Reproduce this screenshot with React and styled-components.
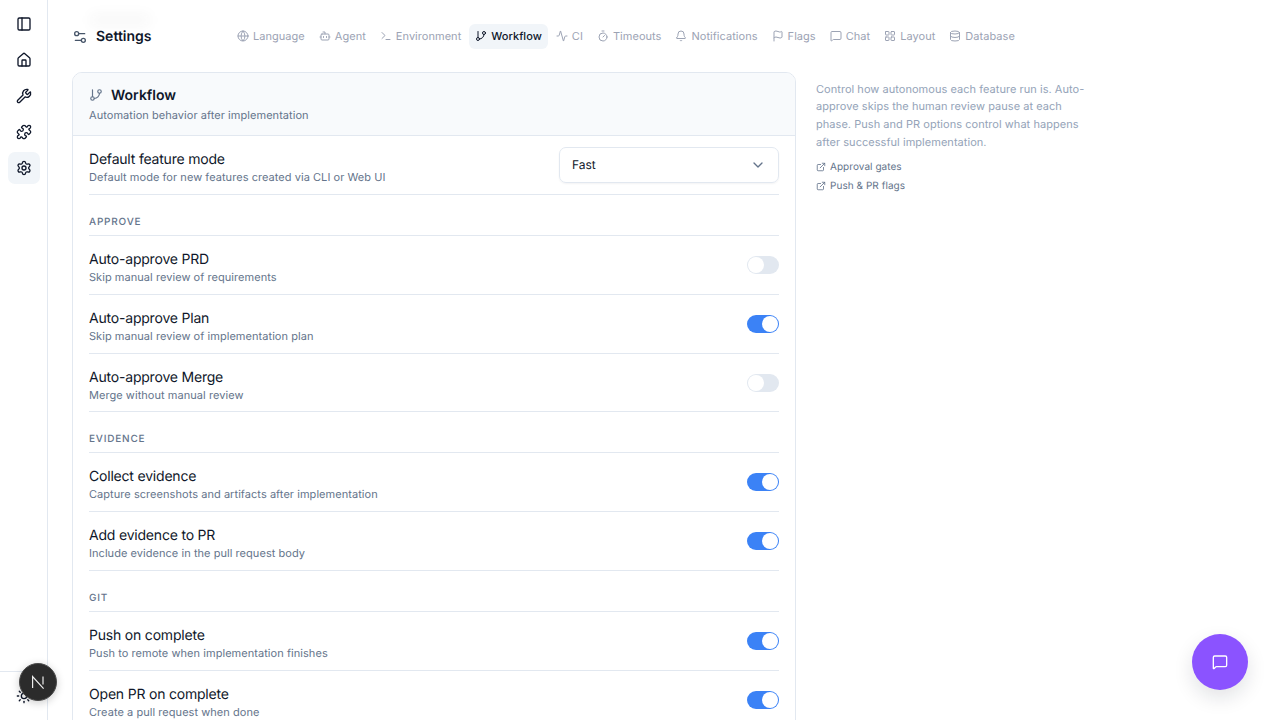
import styled, { createGlobalStyle } from "styled-components";
import {
  PanelLeft, Home, Wrench, Puzzle, Settings, Sun, Settings2, Globe, Bot, Terminal, GitBranch,
  Activity, Timer, Bell, Flag, MessageSquare, LayoutGrid, Database, ChevronDown, ExternalLink,
} from "lucide-react";

const GlobalStyle = createGlobalStyle`
  html, body { margin: 0; height: 100%; background: #fff; overflow: hidden; }
  body {
    font-family: Inter, "Noto Sans", sans-serif;
    color: #0f172a;
    text-rendering: geometricPrecision;
    -webkit-font-smoothing: antialiased;
  }
`;

const Page = styled.div`
  width: 1280px;
  height: 720px;
  display: flex;
  overflow: hidden;
  position: relative;
`;

const Sidebar = styled.aside`
  width: 47px;
  flex: none;
  border-right: 1px solid #e2e8f0;
  display: flex;
  flex-direction: column;
  align-items: center;
  padding-top: 8px;
  gap: 4px;
  box-sizing: content-box;
`;

const NavButton = styled.div`
  width: 32px;
  height: 32px;
  border-radius: 7px;
  display: flex;
  align-items: center;
  justify-content: center;
  color: #0f172a;
  background: ${(p) => (p.$active ? "#f1f5f9" : "transparent")};
`;

const SidebarFoot = styled.div`
  margin-top: auto;
  width: 100%;
  height: 48px;
  border-top: 1px solid #e2e8f0;
  display: flex;
  align-items: center;
  justify-content: center;
  color: #0f172a;
`;

const Main = styled.main`
  flex: 1;
  padding: 24px 24px 0;
  min-width: 0;
`;

const TopBar = styled.header`
  display: flex;
  align-items: center;
  height: 25px;
  margin-bottom: 23px;
`;

const PageTitle = styled.h1`
  margin: 0;
  width: 159px;
  flex: none;
  display: flex;
  align-items: center;
  gap: 8px;
  font-size: 14px;
  line-height: 24px;
  font-weight: 600;
  color: #0f172a;
  svg { color: #475569; }
`;

const Tabs = styled.nav`
  display: flex;
  align-items: center;
  gap: 2px;
`;

const Tab = styled.div`
  height: 25px;
  padding: 0 6px 1px;
  box-sizing: border-box;
  border-radius: 6px;
  display: flex;
  align-items: center;
  gap: 4px;
  font-size: 11px;
  letter-spacing: 0.04px;
  white-space: nowrap;
  color: ${(p) => (p.$active ? "#0f172a" : "#9ca3b4")};
  background: ${(p) => (p.$active ? "#f1f5f9" : "transparent")};
  font-weight: ${(p) => (p.$active ? 500 : 400)};
`;

const Columns = styled.div`
  display: flex;
  align-items: flex-start;
  gap: 20px;
`;

const Card = styled.section`
  width: 724px;
  flex: none;
  box-sizing: border-box;
  border: 1px solid #e2e8f0;
  border-radius: 10px;
  overflow: hidden;
  background: #fff;
`;

const CardHead = styled.div`
  height: 63px;
  box-sizing: border-box;
  padding: 12px 16px 0;
  background: #f8fafc;
  border-bottom: 1px solid #e2e8f0;
`;

const CardTitle = styled.h2`
  margin: 0;
  display: flex;
  align-items: center;
  gap: 8px;
  height: 20px;
  font-size: 14px;
  font-weight: 600;
  svg { color: #64748b; }
`;

const CardDesc = styled.p`
  margin: 2px 0 0;
  font-size: 11px;
  line-height: 16px;
  letter-spacing: 0.05px;
  color: #64748b;
`;

const CardBody = styled.div`
  padding: 0 16px 12px;
`;

const Row = styled.div`
  height: ${(p) => p.$height ?? 59}px;
  box-sizing: border-box;
  display: flex;
  align-items: center;
  justify-content: space-between;
  border-bottom: ${(p) => (p.$last ? "none" : "1px solid #e2e8f0")};
`;

const RowText = styled.div`
  padding-top: 5px;
`;

const RowTitle = styled.div`
  font-size: 14px;
  line-height: 20px;
  letter-spacing: -0.2px;
  color: #0f172a;
`;

const RowDesc = styled.div`
  margin-top: -1px;
  font-size: 11px;
  line-height: 16px;
  letter-spacing: 0.05px;
  color: #64748b;
`;

const SectionLabel = styled.div`
  height: 41px;
  box-sizing: border-box;
  padding-top: 21px;
  border-bottom: 1px solid #e2e8f0;
  font-size: 10px;
  line-height: 12px;
  font-weight: 500;
  letter-spacing: 0.8px;
  color: #64748b;
`;

const Select = styled.div`
  width: 220px;
  height: 36px;
  box-sizing: border-box;
  padding: 0 12px 1px;
  border: 1px solid #e2e8f0;
  border-radius: 7px;
  box-shadow: 0 1px 2px rgba(15, 23, 42, 0.05);
  display: flex;
  align-items: center;
  justify-content: space-between;
  font-size: 12px;
  svg { color: #64748b; }
`;

const Switch = styled.div`
  width: 32px;
  height: 18px;
  box-sizing: border-box;
  border-radius: 9px;
  padding: 1px;
  display: flex;
  justify-content: ${(p) => (p.$on ? "flex-end" : "flex-start")};
  background: ${(p) => (p.$on ? "#3b82f6" : "#e2e8f0")};
  &::after {
    content: "";
    width: 16px;
    height: 16px;
    border-radius: 50%;
    background: #fff;
  }
`;

const Aside = styled.aside`
  width: 272px;
  padding-top: 8.5px;
`;

const AsideText = styled.p`
  margin: 0 0 5.5px;
  font-size: 11px;
  line-height: 1.625;
  letter-spacing: 0.04px;
  color: #94a3b8;
`;

const DocLink = styled.div`
  display: flex;
  align-items: center;
  gap: 4px;
  height: 19px;
  font-size: 10px;
  letter-spacing: 0.05px;
  color: #64748b;
`;

const HeaderSmudge = styled.div`
  position: absolute;
  left: 90px;
  top: 14px;
  width: 60px;
  height: 12px;
  border-radius: 6px;
  background: rgba(15, 23, 42, 0.035);
  filter: blur(6px);
  pointer-events: none;
`;

const NextBadge = styled.div`
  position: absolute;
  left: 19px;
  top: 663px;
  width: 38px;
  height: 38px;
  box-sizing: border-box;
  border-radius: 50%;
  background: #2b2b2b;
  border: 1px solid #4a4a4a;
  color: #ececec;
  display: flex;
  align-items: center;
  justify-content: center;
  box-shadow: 0 2px 8px rgba(0, 0, 0, 0.2);
`;

const ChatButton = styled.div`
  position: absolute;
  left: 1192px;
  top: 634px;
  width: 56px;
  height: 56px;
  border-radius: 50%;
  background: #8b53ff;
  color: #fff;
  display: flex;
  align-items: center;
  justify-content: center;
  box-shadow: 0 8px 20px rgba(15, 23, 42, 0.12);
`;

const tabs = [
  { label: "Language", icon: Globe },
  { label: "Agent", icon: Bot },
  { label: "Environment", icon: Terminal },
  { label: "Workflow", icon: GitBranch, active: true },
  { label: "CI", icon: Activity },
  { label: "Timeouts", icon: Timer },
  { label: "Notifications", icon: Bell },
  { label: "Flags", icon: Flag },
  { label: "Chat", icon: MessageSquare },
  { label: "Layout", icon: LayoutGrid },
  { label: "Database", icon: Database },
];

function ToggleRow({ title, desc, on, last, height }) {
  return (
    <Row $last={last} $height={height}>
      <RowText>
        <RowTitle>{title}</RowTitle>
        <RowDesc>{desc}</RowDesc>
      </RowText>
      <Switch $on={on} />
    </Row>
  );
}

export default function App() {
  return (
    <Page>
      <GlobalStyle />
      <HeaderSmudge />
      <Sidebar>
        <NavButton><PanelLeft size={16} /></NavButton>
        <NavButton><Home size={16} /></NavButton>
        <NavButton><Wrench size={16} /></NavButton>
        <NavButton><Puzzle size={16} /></NavButton>
        <NavButton $active><Settings size={16} /></NavButton>
        <SidebarFoot><Sun size={16} /></SidebarFoot>
      </Sidebar>
      <Main>
        <TopBar>
          <PageTitle><Settings2 size={16} />Settings</PageTitle>
          <Tabs>
            {tabs.map(({ label, icon: Icon, active }) => (
              <Tab key={label} $active={active}>
                <Icon size={12} />
                {label}
              </Tab>
            ))}
          </Tabs>
        </TopBar>
        <Columns>
          <Card>
            <CardHead>
              <CardTitle><GitBranch size={14} />Workflow</CardTitle>
              <CardDesc>Automation behavior after implementation</CardDesc>
            </CardHead>
            <CardBody>
              <Row>
                <RowText>
                  <RowTitle>Default feature mode</RowTitle>
                  <RowDesc>Default mode for new features created via CLI or Web UI</RowDesc>
                </RowText>
                <Select>Fast<ChevronDown size={16} /></Select>
              </Row>
              <SectionLabel>APPROVE</SectionLabel>
              <ToggleRow title="Auto-approve PRD" desc="Skip manual review of requirements" />
              <ToggleRow title="Auto-approve Plan" desc="Skip manual review of implementation plan" on />
              <ToggleRow title="Auto-approve Merge" desc="Merge without manual review" height={58} />
              <SectionLabel>EVIDENCE</SectionLabel>
              <ToggleRow title="Collect evidence" desc="Capture screenshots and artifacts after implementation" on />
              <ToggleRow title="Add evidence to PR" desc="Include evidence in the pull request body" on />
              <SectionLabel>GIT</SectionLabel>
              <ToggleRow title="Push on complete" desc="Push to remote when implementation finishes" on />
              <ToggleRow title="Open PR on complete" desc="Create a pull request when done" on last height={57} />
            </CardBody>
          </Card>
          <Aside>
            <AsideText>
              Control how autonomous each feature run is. Auto-approve skips the human review pause at each phase. Push and PR options control what happens after successful implementation.
            </AsideText>
            <DocLink><ExternalLink size={10} />Approval gates</DocLink>
            <DocLink><ExternalLink size={10} />Push &amp; PR flags</DocLink>
          </Aside>
        </Columns>
      </Main>
      <NextBadge>
        <svg width="16" height="16" viewBox="0 0 16 16" fill="none" stroke="currentColor" strokeWidth="1.2">
          <path d="M2.6 14V2.6L13.6 14.6" />
          <path d="M13 2.5v8" />
        </svg>
      </NextBadge>
      <ChatButton><MessageSquare size={16} /></ChatButton>
    </Page>
  );
}
